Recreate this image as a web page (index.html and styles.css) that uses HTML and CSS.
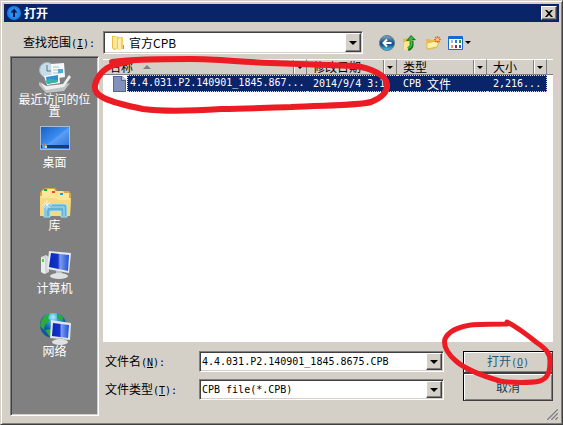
FILE: index.html
```html
<!DOCTYPE html>
<html lang="zh-CN">
<head>
<meta charset="utf-8">
<title>打开</title>
<link rel="stylesheet" href="styles.css">
</head>
<body>
<main class="window">
  <header class="titlebar">
    <svg class="app-icon" viewBox="0 0 14 14"><circle cx="7" cy="7" r="7" fill="#1f7fe8"/><circle cx="7" cy="7" r="5" fill="#2f8cf0"/><path d="M7 2.5 3.5 6.5H6V11h2V6.5h2.5z" fill="#061a45"/></svg>
    <h1>打开</h1>
    <button class="close" aria-label="关闭"><svg viewBox="0 0 8 7"><path d="M0 0h2l2 2 2-2h2L5 3.500 8 7H6L4 5 2 7H0l3-3.500z"/></svg></button>
  </header>

  <div class="client">
    <div class="lookin">
      <label for="folder">查找范围<span class="latin">(<u>I</u>):</span></label>
      <div class="combo combo-folder">
        <svg class="folder" viewBox="0 0 16 16"><path d="M2 1h5l1 1v12l-4 1-2-2z" fill="#e9bf4b"/><path d="M3 2l4-1v13l-4-1z" fill="#fbe69a"/><path d="M7 2h6v12l-5 1z" fill="#f3cf64"/><path d="M8 4l3-1v11l-3 1z" fill="#ffedad"/><path d="M13 10h1v4h-1z" fill="#58a8cf"/></svg>
        <select id="folder"><option>官方CPB</option></select>
        <span class="drop"></span>
      </div>
      <nav class="tools">
        <button aria-label="后退"><svg viewBox="0 0 16 16"><defs><linearGradient id="bk" x2="0" y2="1"><stop stop-color="#8da8bd"/><stop offset=".45" stop-color="#1d568c"/><stop offset=".6" stop-color="#14508c"/><stop offset="1" stop-color="#4bd1f2"/></linearGradient></defs><circle cx="8" cy="8" r="7.500" fill="url(#bk)" stroke="#5c7893"/><path d="M12.500 8H5M8 4.500 4.500 8 8 11.500" fill="none" stroke="#fff" stroke-width="2"/></svg></button>
        <button aria-label="向上"><svg viewBox="0 0 16 16"><path d="M1 4l4-1 1 1h6v9l-10 2z" fill="#e5bb45"/><path d="M2 7l10-2-1 9-9 1z" fill="#fce78f"/><path d="M6 14c4-1 4-4 3.500-8" fill="none" stroke="#176f20" stroke-width="4"/><path d="M4 6l5-6 5 5z" fill="#176f20"/><path d="M6 13c4-1 4-4 3-9" fill="none" stroke="#39b83e" stroke-width="2"/><path d="M6 5l3-4 3 3z" fill="#39b83e"/></svg></button>
        <button aria-label="新建文件夹"><svg viewBox="0 0 16 16"><path d="M1 4h4l1 1h6v8l-10 2z" fill="#e7bd4c"/><path d="M2 8l9-2 3 1-2 5-10 2z" fill="#fff0a7" stroke="#e3b952"/><path d="M12.500 1v7M9 4.500h7M10 2l5 5M15 2l-5 5" stroke="#f3642b" stroke-width="1.200"/><circle cx="12.500" cy="4.500" r="1.500" fill="#ffd28b"/></svg></button>
        <button aria-label="查看" class="view"><svg viewBox="0 0 15 14"><rect width="15" height="14" rx="1" fill="#1769cf"/><path d="M1 3h13v10H1z" fill="#fff"/><path d="M3 4h2v3H3z" fill="#aab7dc"/><path d="M7 4h2v3H7z" fill="#2a7ee0"/><path d="M11 4h2v3h-2z" fill="#279a35"/><path d="M3 9h2v3H3z" fill="#ee9276"/><path d="M7 9h2v3H7z" fill="#78355c"/><path d="M11 9h2v3h-2z" fill="#3957a6"/></svg><i class="arrow small"></i></button>
      </nav>
    </div>

    <div class="body">
      <nav class="places">
        <a href="#recent"><svg viewBox="0 0 32 32"><circle cx="8" cy="9" r="7.500" fill="#c6dce8" stroke="#9fb9c7"/><path d="M8 4v6h4" fill="none" stroke="#587788"/><path d="M12 3l13-1 1 14-13 2z" fill="#f7f9fa"/><path d="M14 6h6M14 9h5M14 12h8" stroke="#aebbc3"/><path d="M19 8h5v4h-5z" fill="#55a6d8"/><path d="M0 21l7 6 24-5-6 8-18 2-7-8z" fill="#bfc3c4"/><path d="M1 21l6 4 17-2 6-9 2 2-7 10-18 3z" fill="#eef0ef"/><path d="M5 15l15-2 1 9-13 2z" fill="#fff"/><path d="M7 16l12-2v7l-11 2z" fill="#2f91d5"/><path d="M7 20c4-4 7-1 12-1v2l-11 2z" fill="#37b4a8"/></svg><span>最近访问的位置</span></a>
        <a href="#desktop"><svg viewBox="0 0 32 32"><defs><linearGradient id="ds" x2="1" y2="1"><stop stop-color="#1760c5"/><stop offset=".5" stop-color="#3c8df0"/><stop offset=".52" stop-color="#5b9ff5"/><stop offset="1" stop-color="#2b6fd5"/></linearGradient></defs><path d="M1 2h30v24H1z" fill="#a8bdd1"/><path d="M2 3h28v22H2z" fill="url(#ds)"/><path d="M2 21h28v3H2z" fill="#163d72"/><circle cx="5.500" cy="22" r="2.500" fill="#48b7dc"/><path d="M4 20h2v2H4z" fill="#ee6a39"/><path d="M6 22h2v2H6z" fill="#f4dc50"/></svg><span>桌面</span></a>
        <a href="#library"><svg viewBox="0 0 32 32"><path d="M3 3l3-2h10l2 3h12l2 3-1 22H1V6z" fill="#d9ab3d"/><path d="M3 4l3-2h9l2 3-1 6H3z" fill="#ffe89e"/><path d="M11 6l3-2h10l2 3v5H11z" fill="#ffe38f"/><path d="M18 8l3-2h9v8H18z" fill="#ffe59a"/><path d="M5 2h3v2H5z" fill="#13ab32"/><path d="M13 4h3v2h-3z" fill="#e5502b"/><path d="M21 6h3v2h-3z" fill="#2498e8"/><path d="M1 9h17l2 2h12l-1 18H1z" fill="#f7d981"/><path d="M2 10h15l2 2h12" fill="none" stroke="#fff1ba"/><path d="M5 30V20q0-3 3-3h17q3 0 3 3v10h-6v-6H11v6z" fill="#61b4d8" stroke="#b0e3f4"/><path d="M7 29V20h18v9" fill="none" stroke="#a8e0f2"/><path d="M8 13v10M3 18h10M5 15l6 6M11 15l-6 6" stroke="#fff" stroke-width=".6"/></svg><span>库</span></a>
        <a href="#computer"><svg viewBox="0 0 32 32"><defs><linearGradient id="sc" x2="1" y2="0"><stop stop-color="#0926be"/><stop offset=".45" stop-color="#1235c9"/><stop offset=".55" stop-color="#809bf0"/><stop offset="1" stop-color="#1a51d9"/></linearGradient></defs><path d="M2 7l5-2 3 2v15l-4 2-4-2z" fill="#d2d5d7"/><path d="M2 7l4 2v15l-4-2z" fill="#e9edef"/><path d="M3 9h2v3H3z" fill="#51d529"/><path d="M10 1l22 2-2 20-22-4z" fill="#e5e9ec"/><path d="M12 3l18 2-1 16-19-4z" fill="url(#sc)"/><path d="M17 21h6v4h-6z" fill="#bec3c6"/><ellipse cx="20" cy="26" rx="9" ry="3" fill="#dfe2e3"/></svg><span>计算机</span></a>
        <a href="#network"><svg viewBox="0 0 32 32"><defs><radialGradient id="gl" cx=".5" cy=".2"><stop stop-color="#b7effc"/><stop offset=".5" stop-color="#2b9ad4"/><stop offset="1" stop-color="#0f57a1"/></radialGradient></defs><circle cx="14" cy="12" r="13" fill="url(#gl)"/><path d="M2 8q4-7 9-8l-2 5 2 3-5 3-1 6-4-4zM18 0l6 4-1 4-5-2zM6 17l6-1 3 4-4 4z" fill="#2dab36"/><path d="M12 7l20 3-1 17-20-2z" fill="#e0e5e8"/><path d="M14 10l16 2-1 13-16-2z" fill="url(#sc)"/><path d="M19 25h5v4h-5z" fill="#b9bec2"/><ellipse cx="21" cy="29" rx="8" ry="3" fill="#dfe2e3"/></svg><span>网络</span></a>
      </nav>

      <section class="right">
        <div class="list">
          <table>
            <colgroup><col class="c-name"><col class="c-mid"><col class="c-mid"><col class="c-size"><col class="c-rest"></colgroup>
            <thead><tr>
              <th><div class="head"><span>名称</span><i class="sort"></i><button aria-label="筛选名称"><i class="arrow small"></i></button></div></th>
              <th><div class="head"><span>修改日期</span><button aria-label="筛选日期"><i class="arrow small"></i></button></div></th>
              <th><div class="head"><span>类型</span><button aria-label="筛选类型"><i class="arrow small"></i></button></div></th>
              <th><div class="head"><span>大小</span><button aria-label="筛选大小"><i class="arrow small"></i></button></div></th>
              <th><div class="head"></div></th>
            </tr></thead>
            <tbody><tr>
              <td class="file"><div class="cell"><svg viewBox="0 0 13 16"><path d="M0 0h9l4 4v12H0z" fill="#53679c"/><path d="M1 1h7v4h4v10H1z" fill="#8291bb"/><path d="M9 0v4h4z" fill="#b9c3dc"/></svg><span class="latin fname">4.4.031.P2.140901_1845.867...</span></div></td>
              <td><div class="cell latin">2014/9/4 3:1</div></td>
              <td><div class="cell"><span class="latin">CPB&nbsp;</span>文件</div></td>
              <td><div class="cell last latin">2,216...</div></td>
              <td class="rest"></td>
            </tr></tbody>
          </table>
        </div>

        <form class="fields">
          <div class="inputs">
            <label for="fname">文件名<span class="latin">(<u>N</u>):</span></label>
            <div class="combo"><input id="fname" type="text" value="4.4.031.P2.140901_1845.8675.CPB"><button type="button" class="drop" aria-label="历史"></button></div>
            <label for="ftype">文件类型<span class="latin">(<u>T</u>):</span></label>
            <div class="combo"><select id="ftype" class="latin"><option>CPB file(*.CPB)</option></select><span class="drop"></span></div>
          </div>
          <div class="actions">
            <button type="button" class="open">打开<span class="latin">(<u>O</u>)</span></button>
            <button type="button" class="cancel">取消</button>
          </div>
        </form>
      </section>
    </div>
  </div>
  <svg class="grip" viewBox="0 0 12 12"><path d="M0 12 12 0M4 12l8-8M8 12l4-4" stroke="#fff"/><path d="M1 12 12 1M5 12l7-7M9 12l3-3" stroke="#808080" stroke-width="1.500"/></svg>
  <svg class="marks" viewBox="0 0 563 425" fill="none" stroke="#ed1c24" stroke-linecap="round" stroke-linejoin="round">
    <path stroke-width="6" d="M111 61C130 58 155 58 190 58C215 58 240 61 270 62C300 63 330 64 354 65C370 67 385 74 386 83C387 92 380 97 370 101C355 105 320 104 290 106C260 107 245 108 220 108C190 110 165 111 142 108C127 105 113 102 103 97C97 94 93 91 94 84C96 75 103 67 113 64L130 60"/>
    <path stroke-width="5" d="M506 323C492 323 478 323 470 324C457 326 447 331 444 338C442 345 447 353 455 360C465 369 482 375 499 380C510 382 530 382 539 380C547 377 549 371 549 360C549 352 545 348 535 341C525 333 516 326 506 321"/>
  </svg>
</main>
</body>
</html>
```
FILE: styles.css
```css
* { box-sizing: border-box; }

body {
  margin: 0;
  background: #d4d0c8;
  color: #000;
  font: 12px/12px "Noto Sans CJK SC", sans-serif;
}

button, input, select { font: inherit; color: inherit; }
button { padding: 0; border: 0; background: none; }

.latin { font-family: "DejaVu Sans Mono", monospace; font-size: 10px; }

.window {
  position: relative;
  display: flex;
  flex-direction: column;
  min-height: 100vh;
  padding: 2px;
  border: 1px solid;
  border-color: #d4d0c8 #404040 #404040 #d4d0c8;
  box-shadow: inset 1px 1px #fff, inset -1px -1px #808080;
}

.titlebar {
  display: flex;
  align-items: center;
  height: 18px;
  margin: 1px 1px 0;
  padding: 0 2px 0 3px;
  background: #0a246a;
  color: #fff;
}
.app-icon { width: 14px; height: 14px; margin-right: 3px; }
h1 { margin: 0; flex: 1; font-size: 12px; line-height: 16px; font-weight: bold; }

.close, .drop {
  display: grid;
  place-items: center;
  background: #d4d0c8;
  border: 1px solid;
  border-color: #fff #404040 #404040 #fff;
  box-shadow: inset -1px -1px #808080;
}
.close { width: 16px; height: 14px; }
.close svg { width: 8px; height: 7px; }

.client {
  flex: 1;
  display: flex;
  flex-direction: column;
  padding: 9px 7px 6px;
}

.lookin { display: flex; align-items: center; height: 23px; margin-bottom: 2px; }
.lookin label { width: 93px; padding-left: 13px; line-height: 16px; white-space: nowrap; }

.combo {
  position: relative;
  display: flex;
  height: 21px;
  background: #fff;
  border: 1px solid;
  border-color: #808080 #fff #fff #808080;
  box-shadow: inset 1px 1px #404040, inset -1px -1px #d4d0c8;
}
.combo-folder { width: 260px; height: 23px; }
.combo input, .combo select {
  flex: 1;
  min-width: 0;
  padding: 0 2px;
  border: 0;
  outline: 0;
  background: transparent;
  appearance: none;
}
.combo input { font-family: "DejaVu Sans Mono", monospace; font-size: 10px; }
.combo .drop { width: 16px; margin: 1px; pointer-events: none; }
.folder { width: 16px; height: 16px; margin: 3px 0 0 6px; }
#folder { padding-left: 3px; }

.drop::after, .arrow {
  content: "";
  width: 0;
  height: 0;
  border: solid transparent;
  border-width: 4px 4px 0;
  border-top-color: #000;
}
.arrow.small { border-width: 3px 3px 0; border-top-color: #000; }

.tools { display: flex; align-items: center; gap: 7px; margin-left: 16px; }
.tools button { display: flex; align-items: center; gap: 2px; }
.tools svg { width: 16px; height: 16px; }
.tools .view svg { width: 15px; height: 14px; }

.body { flex: 1; display: grid; grid-template-columns: 89px 1fr; gap: 4px; }

.places {
  display: flex;
  flex-direction: column;
  padding: 4px 6px;
  background: #808080;
  border: 1px solid;
  border-color: #808080 #fff #fff #808080;
  box-shadow: inset 1px 1px #404040, inset -1px -1px #d4d0c8;
}
.places a {
  display: flex;
  flex-direction: column;
  align-items: center;
  height: 63px;
  color: #fff;
  text-align: center;
  text-decoration: none;
}
.places svg { width: 32px; height: 32px; flex: none; }

.right { display: flex; flex-direction: column; min-width: 0; padding-top: 3px; }
.list { flex: 1; background: #fff; overflow: hidden; }

table { width: 100%; table-layout: fixed; border-collapse: collapse; }
.c-mid { width: 90px; }
.c-size { width: 60px; }
.c-rest { width: 6px; }
th, td { padding: 0; font-weight: normal; text-align: left; white-space: nowrap; }

.head {
  display: flex;
  align-items: center;
  height: 16px;
  padding-left: 6px;
  overflow: hidden;
  background: #d4d0c8;
  border: solid;
  border-width: 1px 1px 1px 0;
  border-color: #fff #808080 #808080;
}
.head button {
  align-self: stretch;
  width: 13px;
  margin-left: auto;
  border-left: 1px solid #808080;
  box-shadow: inset 1px 0 #fff;
  display: grid;
  place-items: center;
}
.sort { margin-left: 10px; border: solid transparent; border-width: 0 4px 4px; border-bottom-color: #808080; }

.cell {
  display: flex;
  align-items: center;
  height: 17px;
  padding-left: 6px;
  overflow: hidden;
  background: #0a246a;
  border: dotted #f5db95;
  border-width: 1px 0;
  color: #fff;
}
.cell.last { border-right-width: 1px; }
.file .cell { padding-left: 0; margin-left: 10px; border: 0; background: none; }
.file svg { width: 13px; height: 16px; margin-right: 1px; flex: none; }
.fname {
  flex: 1;
  align-self: stretch;
  padding: 1px 0 0 2px;
  background: #0a246a;
  border: 1px dotted #f5db95;
  border-right: 0;
}

.fields { display: flex; gap: 19px; margin: 9px 0 15px; }
.inputs {
  flex: 1;
  display: grid;
  grid-template-columns: 94px 1fr;
  row-gap: 7px;
  align-items: center;
  align-content: start;
  padding-left: 2px;
}
.inputs label { line-height: 16px; }

.actions { display: flex; flex-direction: column; width: 90px; }
.actions button {
  border: 1px solid;
  border-color: #fff #404040 #404040 #000;
  box-shadow: inset 1px 1px #fff, inset -1px -1px #808080;
}
.actions .open { height: 22px; border-top-color: #000; color: #255b80; }
.actions .cancel { height: 28px; padding-bottom: 0; border-top-color: #404040; color: #17384f; }

.grip { position: absolute; right: 4px; bottom: 4px; width: 12px; height: 12px; }
.marks { position: absolute; left: 0; top: 0; width: 563px; height: 425px; pointer-events: none; }
```
